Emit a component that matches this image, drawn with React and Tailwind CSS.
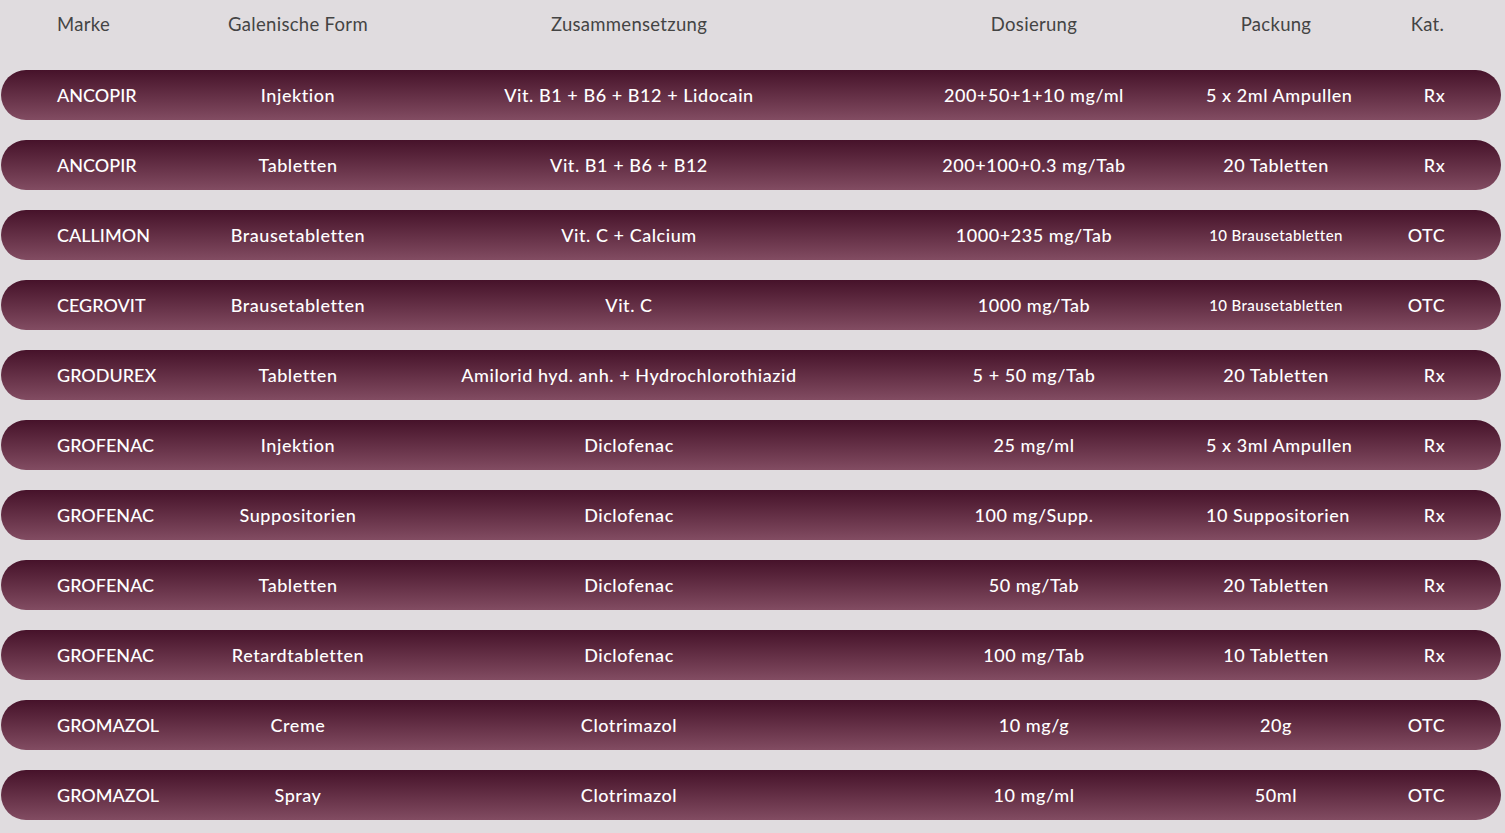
const ROWS = [
  ['ANCOPIR', 'Injektion', 'Vit. B1 + B6 + B12 + Lidocain', '200+50+1+10 mg/ml', '5 x 2ml Ampullen', 'Rx'],
  ['ANCOPIR', 'Tabletten', 'Vit. B1 + B6 + B12', '200+100+0.3 mg/Tab', '20 Tabletten', 'Rx'],
  ['CALLIMON', 'Brausetabletten', 'Vit. C + Calcium', '1000+235 mg/Tab', '10 Brausetabletten', 'OTC'],
  ['CEGROVIT', 'Brausetabletten', 'Vit. C', '1000 mg/Tab', '10 Brausetabletten', 'OTC'],
  ['GRODUREX', 'Tabletten', 'Amilorid hyd. anh. + Hydrochlorothiazid', '5 + 50 mg/Tab', '20 Tabletten', 'Rx'],
  ['GROFENAC', 'Injektion', 'Diclofenac', '25 mg/ml', '5 x 3ml Ampullen', 'Rx'],
  ['GROFENAC', 'Suppositorien', 'Diclofenac', '100 mg/Supp.', '10 Suppositorien', 'Rx'],
  ['GROFENAC', 'Tabletten', 'Diclofenac', '50 mg/Tab', '20 Tabletten', 'Rx'],
  ['GROFENAC', 'Retardtabletten', 'Diclofenac', '100 mg/Tab', '10 Tabletten', 'Rx'],
  ['GROMAZOL', 'Creme', 'Clotrimazol', '10 mg/g', '20g', 'OTC'],
  ['GROMAZOL', 'Spray', 'Clotrimazol', '10 mg/ml', '50ml', 'OTC'],
];

const GRID = 'grid grid-cols-[199px_196px_466px_344px_140px_1fr] items-center';

export default function App() {
  return (
    <div className="min-h-screen bg-[#e0dcdf] pl-[1px] font-['Lato',sans-serif]">
      <div className="w-[1500px]">
        <div className={`${GRID} h-[50px] text-[18.5px] text-[#444] tracking-[0.3px]`}>
          <div className="pl-[56px]">Marke</div>
          <div className="text-center">Galenische Form</div>
          <div className="text-center">Zusammensetzung</div>
          <div className="text-center">Dosierung</div>
          <div className="text-center">Packung</div>
          <div className="text-center pl-[8px]">Kat.</div>
        </div>
        <div className="mt-[20px] flex flex-col gap-[20px]">
          {ROWS.map((r, i) => (
            <div
              key={i}
              className={`${GRID} h-[50px] rounded-full bg-gradient-to-b from-[#46122a] to-[#824c62] text-white text-[18px] font-medium tracking-[0.55px]`}
            >
              <div className="pl-[56px] tracking-normal">{r[0]}</div>
              <div className="text-center">{r[1]}</div>
              <div className="text-center">{r[2]}</div>
              <div className="text-center">{r[3]}</div>
              <div className={`text-center whitespace-nowrap ${r[4] === '10 Brausetabletten' ? 'text-[15px] tracking-[0.4px]' : ''}`}>{r[4]}</div>
              <div className={`text-center ${r[5] === 'Rx' ? 'pl-[22px]' : 'pl-[6px]'}`}>{r[5]}</div>
            </div>
          ))}
        </div>
      </div>
    </div>
  );
}
